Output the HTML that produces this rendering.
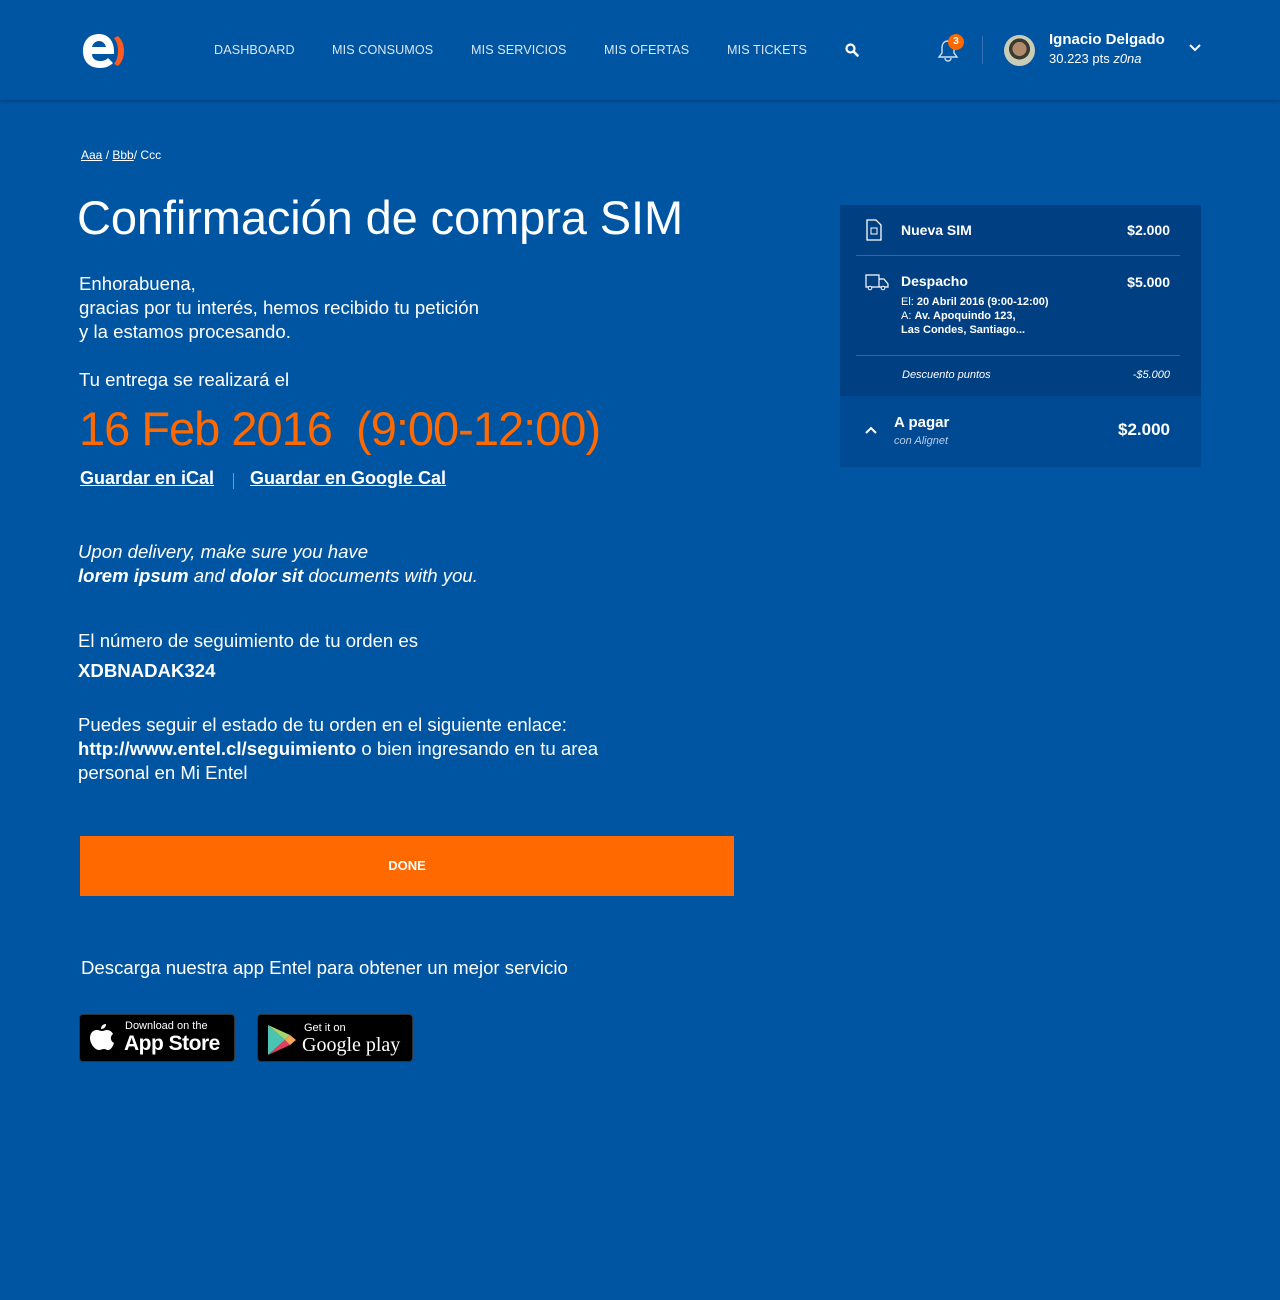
<!DOCTYPE html>
<html><head><meta charset="utf-8"><style>
*{margin:0;padding:0;box-sizing:border-box}
body{width:1280px;height:1300px;background:#0055a2;font-family:"Liberation Sans",sans-serif;color:#fff;position:relative;overflow:hidden}
.a{position:absolute;white-space:nowrap}
header{position:absolute;left:0;top:0;width:1280px;height:100px;background:#0055a2;box-shadow:0 2px 3px rgba(0,0,0,.18)}
.nav{font-size:12.6px;color:#dbe6f3;top:43px;letter-spacing:.1px}
.p{font-size:18.6px;line-height:24px}
u{text-decoration:underline}
.panel{position:absolute;left:840px;top:205px;width:361px;height:191px;background:#003f82}
.pay{position:absolute;left:840px;top:396px;width:361px;height:71px;background:#004a93}
.btn{position:absolute;left:80px;top:836px;width:654px;height:60px;background:#ff6900;font-size:13px;font-weight:bold;text-align:center;line-height:60px}
.store{position:absolute;top:1014px;width:156px;height:48px;background:#000;border-radius:4px;border:1px solid #333}
</style></head><body>
<header>
<svg class="a" style="left:82px;top:33px" width="46" height="36" viewBox="0 0 46 36"><path d="M17 1C7 1 1 8 1 18s6 17 17 17c6 0 10-2 13-5l-5-5c-2 2-4 3-8 3-5 0-8-3-8-7h22v-3C32 8 26 1 17 1zm-7 13c1-4 4-6 7-6s6 2 7 6z" fill="#fff"/><path d="M36 3c4 4 6 9 6 15s-2 11-6 15l-4-2c3-4 4-8 4-13s-1-9-4-13z" fill="#ff5a1f"/></svg>
<div class="a nav" style="left:214px">DASHBOARD</div>
<div class="a nav" style="left:332px">MIS CONSUMOS</div>
<div class="a nav" style="left:471px">MIS SERVICIOS</div>
<div class="a nav" style="left:604px">MIS OFERTAS</div>
<div class="a nav" style="left:727px">MIS TICKETS</div>
<svg class="a" style="left:845px;top:43px" width="14" height="14" viewBox="0 0 14 14"><circle cx="5.5" cy="5.5" r="4" stroke="#fff" stroke-width="2.2" fill="none"/><path d="M8.5 8.5L12.5 12.5" stroke="#fff" stroke-width="2.6" stroke-linecap="round"/></svg>
<svg class="a" style="left:936px;top:38px" width="24" height="25" viewBox="0 0 24 25"><path d="M12 3c-4 0-6 3-6 7v5l-3 4h18l-3-4v-5c0-4-2-7-6-7zM9 20c0 2 1.5 3 3 3s3-1 3-3" stroke="#cfe0f2" stroke-width="1.4" fill="none"/></svg>
<div class="a" style="left:948px;top:34px;width:16px;height:16px;border-radius:50%;background:#ff6900;font-size:10px;font-weight:bold;text-align:center;line-height:16px">3</div>
<div class="a" style="left:982px;top:36px;width:1px;height:28px;background:#3a74b6"></div>
<div class="a" style="left:1004px;top:35px;width:31px;height:31px;border-radius:50%;background:radial-gradient(circle at 50% 45%,#b08a6a 0 30%,#3b3a2f 31% 45%,#c9cdb8 46%)"></div>
<div class="a" style="left:1049px;top:31px;font-size:15px;font-weight:bold">Ignacio Delgado</div>
<div class="a" style="left:1049px;top:51px;font-size:13px">30.223 pts <i>z0na</i></div>
<svg class="a" style="left:1189px;top:44px" width="12" height="8" viewBox="0 0 12 8"><path d="M1 1l5 5 5-5" stroke="#fff" stroke-width="2" fill="none"/></svg>
</header>

<div class="a" style="left:81px;top:148px;font-size:12px"><u>Aaa</u> / <u>Bbb</u>/ Ccc</div>
<div class="a" style="left:77px;top:190px;font-size:47px;font-weight:300;letter-spacing:-0.1px">Confirmación de compra SIM</div>
<div class="a p" style="left:79px;top:272px">Enhorabuena,<br>gracias por tu interés, hemos recibido tu petición<br>y la estamos procesando.</div>
<div class="a p" style="left:79px;top:368px">Tu entrega se realizará el</div>
<div class="a" style="left:79px;top:401px;font-size:47px;color:#ff6900;letter-spacing:-1px">16 Feb 2016&nbsp; (9:00-12:00)</div>
<div class="a" style="left:80px;top:468px;font-size:18px;font-weight:bold"><u>Guardar en iCal</u></div>
<div class="a" style="left:233px;top:473px;width:1px;height:16px;background:#6e98c8"></div>
<div class="a" style="left:250px;top:468px;font-size:18px;font-weight:bold"><u>Guardar en Google Cal</u></div>
<div class="a p" style="left:78px;top:540px;font-style:italic">Upon delivery, make sure you have<br><b>lorem ipsum</b> and <b>dolor sit</b> documents with you.</div>
<div class="a p" style="left:78px;top:629px">El número de seguimiento de tu orden es</div>
<div class="a p" style="left:78px;top:659px;font-weight:bold">XDBNADAK324</div>
<div class="a p" style="left:78px;top:713px">Puedes seguir el estado de tu orden en el siguiente enlace:<br><b>http://www.entel.cl/seguimiento</b> o bien ingresando en tu area<br>personal en Mi Entel</div>
<div class="btn">DONE</div>
<div class="a p" style="left:81px;top:956px">Descarga nuestra app Entel para obtener un mejor servicio</div>

<div class="store" style="left:79px">
<svg class="a" style="left:9px;top:8px" width="26" height="30" viewBox="0 0 26 30"><path d="M17 1c0 3-2 5-5 5 0-3 2-5 5-5zM13 8c2 0 3-1 5-1 3 0 5 2 6 4-3 2-3 7 1 9-1 3-3 7-6 7-2 0-2-1-4-1s-3 1-5 1C6 27 1 21 1 15c0-5 3-8 7-8 2 0 3 1 5 1z" fill="#fff"/></svg>
<div class="a" style="left:45px;top:5px;font-size:11px">Download on the</div>
<div class="a" style="left:44px;top:17px;font-size:21px;font-weight:bold;letter-spacing:-0.5px">App Store</div>
</div>
<div class="store" style="left:257px">
<svg class="a" style="left:9px;top:9px" width="30" height="32" viewBox="0 0 30 32"><path d="M1 1l17 15L1 31z" fill="#4bc4b4"/><path d="M1 1l17 15 5-5z" fill="#a6d66b"/><path d="M1 31l17-15 5 5z" fill="#e0415f"/><path d="M23 11l6 5-6 5-5-5z" fill="#f6a75a"/></svg>
<div class="a" style="left:46px;top:7px;font-size:11px">Get it on</div>
<div class="a" style="left:44px;top:19px;font-size:20px;font-family:'Liberation Serif',serif">Google play</div>
</div>

<div class="panel">
<svg class="a" style="left:26px;top:14px" width="16" height="22" viewBox="0 0 16 22"><path d="M1 1h9l5 5v15H1z" stroke="#fff" stroke-width="1.3" fill="none"/><rect x="5" y="9" width="6" height="6" stroke="#fff" fill="none"/></svg>
<div class="a" style="left:61px;top:17px;font-size:14px;font-weight:bold">Nueva SIM</div>
<div class="a" style="right:31px;top:17px;font-size:14px;font-weight:bold">$2.000</div>
<div class="a" style="left:16px;top:50px;width:324px;height:1px;background:#3566a2"></div>
<svg class="a" style="left:25px;top:69px" width="24" height="17" viewBox="0 0 24 17"><path d="M1 1h13v12H1zM14 5h5l4 5v3h-9" stroke="#fff" stroke-width="1.2" fill="none"/><circle cx="5" cy="14" r="1.8" fill="#003f82" stroke="#fff"/><circle cx="18" cy="14" r="1.8" fill="#003f82" stroke="#fff"/></svg>
<div class="a" style="left:61px;top:68px;font-size:14px;font-weight:bold">Despacho</div>
<div class="a" style="right:31px;top:69px;font-size:14px;font-weight:bold">$5.000</div>
<div class="a" style="left:61px;top:90px;font-size:11px;line-height:14px">El: <b>20 Abril 2016 (9:00-12:00)</b><br>A: <b>Av. Apoquindo 123,</b><br><b>Las Condes, Santiago...</b></div>
<div class="a" style="left:16px;top:150px;width:324px;height:1px;background:#3566a2"></div>
<div class="a" style="left:62px;top:164px;font-size:11px;font-style:italic">Descuento puntos</div>
<div class="a" style="right:31px;top:164px;font-size:11px;font-style:italic">-$5.000</div>
</div>
<div class="pay">
<svg class="a" style="left:25px;top:30px" width="12" height="8" viewBox="0 0 12 8"><path d="M1 7l5-5 5 5" stroke="#fff" stroke-width="2" fill="none"/></svg>
<div class="a" style="left:54px;top:18px;font-size:15px;font-weight:bold">A pagar</div>
<div class="a" style="left:54px;top:39px;font-size:11px;font-style:italic;color:#b9cde6">con Alignet</div>
<div class="a" style="right:31px;top:24px;font-size:17px;font-weight:bold">$2.000</div>
</div>
</body></html>
